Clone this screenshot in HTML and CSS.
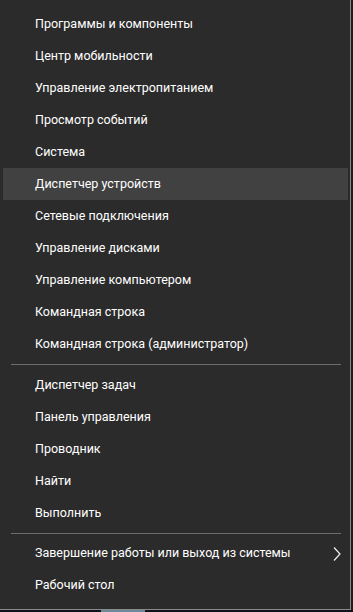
FILE: index.html
```html
<!DOCTYPE html>
<html lang="ru">
<head>
<meta charset="utf-8">
<link rel="stylesheet" href="styles.css">
</head>
<body>
<div class="screen">
  <div class="menu">
    <div class="group">
      <div class="item">Программы и компоненты</div>
      <div class="item">Центр мобильности</div>
      <div class="item">Управление электропитанием</div>
      <div class="item">Просмотр событий</div>
      <div class="item">Система</div>
      <div class="item active">Диспетчер устройств</div>
      <div class="item">Сетевые подключения</div>
      <div class="item">Управление дисками</div>
      <div class="item">Управление компьютером</div>
      <div class="item">Командная строка</div>
      <div class="item">Командная строка (администратор)</div>
    </div>
    <div class="sep"></div>
    <div class="group">
      <div class="item">Диспетчер задач</div>
      <div class="item">Панель управления</div>
      <div class="item">Проводник</div>
      <div class="item">Найти</div>
      <div class="item">Выполнить</div>
    </div>
    <div class="sep"></div>
    <div class="group">
      <div class="item has-sub">
        <span>Завершение работы или выход из системы</span>
        <svg class="chev" width="8" height="14" viewBox="0 0 8 14"><path d="M1 0.5 L7 7 L1 13.5" fill="none" stroke="#f2f2f2" stroke-width="1.2"/></svg>
      </div>
      <div class="item">Рабочий стол</div>
    </div>
  </div>
  <div class="taskbar"><div class="task-active"></div></div>
</div>
</body>
</html>
```

FILE: styles.css
```css
html, body {
  margin: 0;
  padding: 0;
  background: #1c1c1c;
}
.screen {
  width: 353px;
  height: 612px;
  overflow: hidden;
  background: #1c1c1c;
}
.menu {
  width: 351px;
  box-sizing: border-box;
  height: 610px;
  background: #2b2b2b;
  border-right: 1px solid #8a8a8a;
  border-bottom: 1px solid #8a8a8a;
  padding: 8px 0 8px 0;
  font-family: Roboto, "Noto Sans", sans-serif;
  font-size: 12.5px;
  color: #ffffff;
  display: flex;
  flex-direction: column;
}
.group {
  display: flex;
  flex-direction: column;
}
.item {
  height: 32px;
  margin: 0 2px 0 3px;
  padding-left: 32px;
  padding-right: 7px;
  display: flex;
  align-items: center;
  justify-content: space-between;
  white-space: nowrap;
  line-height: 16px;
}
.item.active {
  background: #414141;
}
.chev {
  display: block;
  margin-top: 1px;
}
.sep {
  height: 1px;
  background: #6d6d6d;
  margin: 4px 9px 4px 11px;
}
.taskbar {
  height: 2px;
  background: #101418;
}
.task-active {
  margin-left: 101px;
  width: 44px;
  height: 2px;
  background: #6b8a9c;
}
```
